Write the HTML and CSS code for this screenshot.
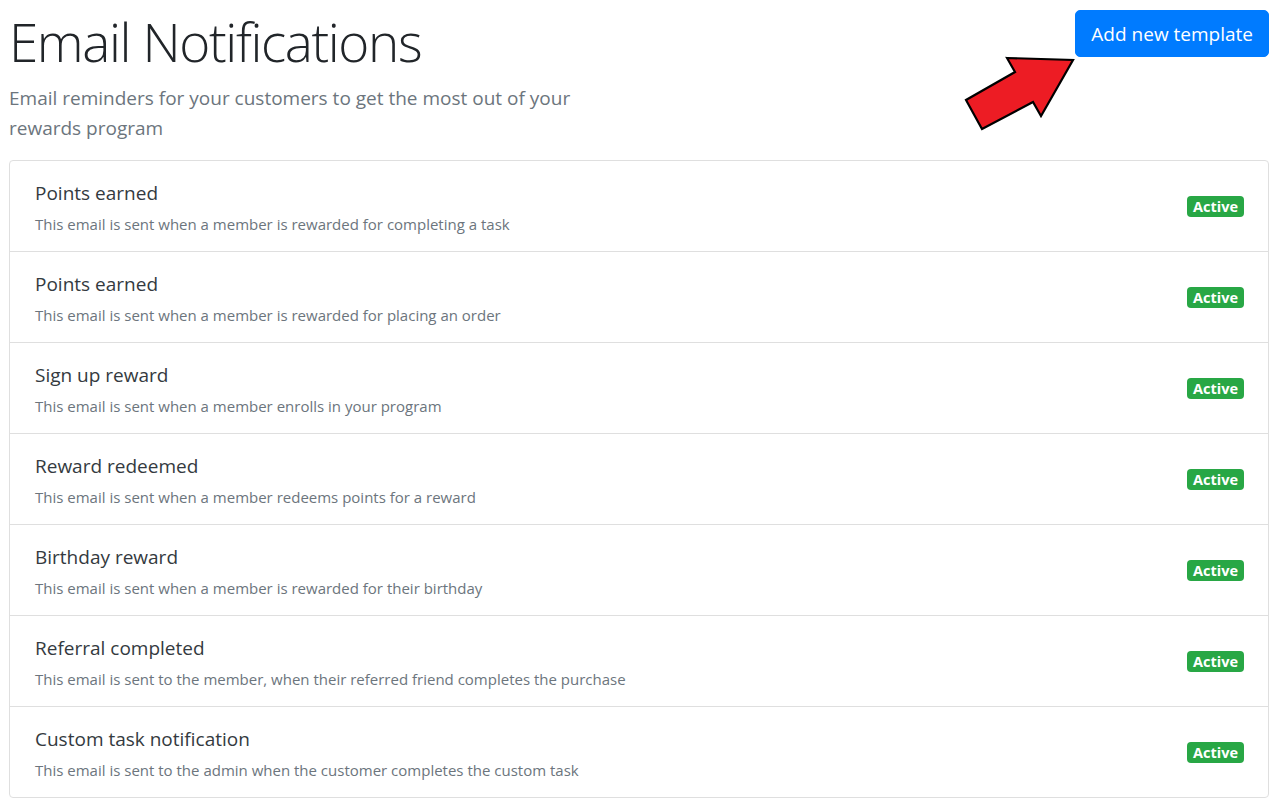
FILE: index.html
```html
<!DOCTYPE html>
<html lang="en">
<head>
<meta charset="utf-8">
<title>Email Notifications</title>
<link rel="stylesheet" href="styles.css">
</head>
<body>
<div class="page">
  <header class="header">
    <div class="intro">
      <h1 class="title">Email Notifications</h1>
      <p class="lead">Email reminders for your customers to get the most out of your rewards program</p>
    </div>
    <button class="btn-add" type="button">Add new template</button>
    <svg class="arrow" width="120" height="80" viewBox="960 54 120 80" aria-hidden="true">
      <polygon points="1007,58 1073,60 1041,116 1033,102 982,129 966,100 1015,72" fill="#ed1c24" stroke="#000" stroke-width="2.2" stroke-linejoin="miter"/>
    </svg>
  </header>

  <ul class="list">
    <li class="item">
      <div class="item-text">
        <h5 class="item-title">Points earned</h5>
        <p class="item-desc">This email is sent when a member is rewarded for completing a task</p>
      </div>
      <span class="badge">Active</span>
    </li>
    <li class="item">
      <div class="item-text">
        <h5 class="item-title">Points earned</h5>
        <p class="item-desc">This email is sent when a member is rewarded for placing an order</p>
      </div>
      <span class="badge">Active</span>
    </li>
    <li class="item">
      <div class="item-text">
        <h5 class="item-title">Sign up reward</h5>
        <p class="item-desc">This email is sent when a member enrolls in your program</p>
      </div>
      <span class="badge">Active</span>
    </li>
    <li class="item">
      <div class="item-text">
        <h5 class="item-title">Reward redeemed</h5>
        <p class="item-desc">This email is sent when a member redeems points for a reward</p>
      </div>
      <span class="badge">Active</span>
    </li>
    <li class="item">
      <div class="item-text">
        <h5 class="item-title">Birthday reward</h5>
        <p class="item-desc">This email is sent when a member is rewarded for their birthday</p>
      </div>
      <span class="badge">Active</span>
    </li>
    <li class="item">
      <div class="item-text">
        <h5 class="item-title">Referral completed</h5>
        <p class="item-desc">This email is sent to the member, when their referred friend completes the purchase</p>
      </div>
      <span class="badge">Active</span>
    </li>
    <li class="item">
      <div class="item-text">
        <h5 class="item-title">Custom task notification</h5>
        <p class="item-desc">This email is sent to the admin when the customer completes the custom task</p>
      </div>
      <span class="badge">Active</span>
    </li>
  </ul>
</div>
</body>
</html>
```

FILE: styles.css
```css
* { box-sizing: border-box; }

body {
  margin: 0;
  background: #fff;
  font-family: "Open Sans", "Noto Sans", "Liberation Sans", sans-serif;
  color: #212529;
}

.page {
  padding: 8px 8px 0 9px;
}

.header {
  position: relative;
  display: flex;
  justify-content: space-between;
  align-items: flex-start;
}

.intro {
  max-width: 600px;
}

.title {
  margin: 0 0 8px 0;
  font-size: 53px;
  font-weight: 350;
  letter-spacing: -1.4px;
  line-height: 67px;
  color: #212529;
}

.lead {
  margin: 0 0 17px 0;
  font-size: 19px;
  line-height: 30px;
  font-weight: 400;
  color: #6c757d;
}

.btn-add {
  margin-top: 2px;
  height: 47px;
  padding: 0 15px;
  border: 1px solid #007bff;
  border-radius: 5px;
  background: #007bff;
  color: #fff;
  font-family: inherit;
  font-size: 19px;
  line-height: 30px;
}

.arrow {
  position: absolute;
  left: 951px;
  top: 46px;
}

.list {
  list-style: none;
  margin: 0;
  padding: 0;
  border: 1px solid #dfdfdf;
  border-radius: 4px;
}

.item {
  display: flex;
  align-items: center;
  justify-content: space-between;
  padding: 20px 24px 16px 25px;
  border-top: 1px solid #dfdfdf;
  height: 91px;
}

.item:first-child {
  border-top: 0;
  height: 90px;
}

.item-title {
  margin: 0 0 8px 0;
  font-size: 19px;
  line-height: 24px;
  font-weight: 400;
  color: #343a40;
}

.item-desc {
  margin: 0;
  font-size: 15px;
  line-height: 22px;
  color: #6c757d;
}

.badge {
  display: inline-block;
  padding: 2px 6px;
  border-radius: 4px;
  background: #28a745;
  color: #fff;
  font-size: 14.5px;
  line-height: 17px;
  font-weight: 700;
  margin-top: -4px;
}
```
